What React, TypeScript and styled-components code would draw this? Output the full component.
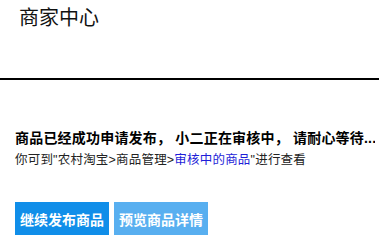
import React from "react";
import styled, { createGlobalStyle } from "styled-components";

const Global = createGlobalStyle`
  html, body { margin: 0; padding: 0; background: #fff; }
  body { font-family: "Liberation Sans", "Noto Sans CJK SC", sans-serif; color: #111; }
`;

const Header = styled.header`
  height: 80px;
  border-bottom: 2px solid #000;
  padding: 8px 0 0 19px;
  box-sizing: border-box;
`;

const Title = styled.h1`
  margin: 0;
  font-size: 20px;
  line-height: 20px;
  font-weight: normal;
  color: #111;
`;

const Content = styled.section`
  padding: 50px 4px 0 15px;
`;

const Headline = styled.div`
  font-size: 14px;
  line-height: 16px;
  font-weight: bold;
  color: #000;
  white-space: pre;
  overflow: hidden;
  letter-spacing: 0.2px;
`;

const Hint = styled.div`
  margin-top: 6px;
  font-size: 12.5px;
  line-height: 16px;
  color: #222;
  letter-spacing: 0.2px;
`;

const Link = styled.a`
  color: #1e1ed8;
  text-decoration: none;
`;

const Actions = styled.div`
  display: flex;
  gap: 5px;
  margin-top: 34px;
`;

const Button = styled.button<{ $light?: boolean }>`
  height: 33px;
  padding: 0 5px;
  border: none;
  border-radius: 0;
  font-family: inherit;
  font-size: 14px;
  font-weight: bold;
  color: #fff;
  background: ${(p) => (p.$light ? "#58aff0" : "#108ee9")};
  cursor: pointer;
`;

export default function App() {
  return (
    <>
      <Global />
      <Header>
        <Title>商家中心</Title>
      </Header>
      <Content>
        <Headline>商品已经成功申请发布， 小二正在审核中， 请耐心等待...</Headline>
        <Hint>
          你可到"农村淘宝&gt;商品管理&gt;<Link>审核中的商品</Link>"进行查看
        </Hint>
        <Actions>
          <Button>继续发布商品</Button>
          <Button $light>预览商品详情</Button>
        </Actions>
      </Content>
    </>
  );
}
